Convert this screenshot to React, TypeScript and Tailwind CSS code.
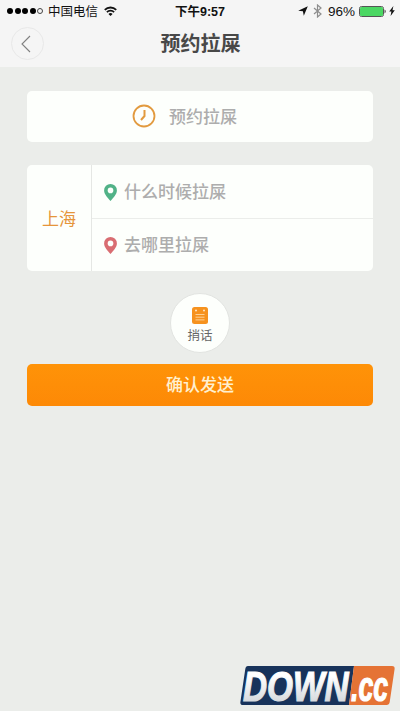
import { ReactNode } from "react";

const StatusBar = () => {
  return (
    <div className="relative flex h-[22px] items-center justify-between pl-[7px] pr-[5px] text-[#111]">
      <div className="flex items-center">
        <div className="flex gap-[1.5px]">
          {[0, 1, 2, 3].map((dot) => (
            <span key={dot} className="size-[6px] rounded-full bg-black" />
          ))}
          <span className="size-[6px] rounded-full border border-[#444]" />
        </div>
        <span className="ml-[5px] pt-[2px] text-[12.5px] leading-none">中国电信</span>
        <svg className="ml-[6px] -mt-px" width="13" height="10" viewBox="0 0 14 11" fill="none">
          <path d="M.7 4.2a9 9 0 0 1 12.6 0" stroke="#111" strokeWidth="2" />
          <path d="M3 6.8a5.7 5.7 0 0 1 8 0" stroke="#111" strokeWidth="1.9" />
          <path d="M7 11 4.7 8.7a3.3 3.3 0 0 1 4.6 0z" fill="#111" />
        </svg>
      </div>
      <span className="absolute inset-x-0 pt-[2px] text-center text-[12.5px] leading-none font-bold">
        下午9:57
      </span>
      <div className="flex items-center">
        <svg width="10" height="10" viewBox="0 0 10 10">
          <path d="M9.8.2 5.8 9.7 4.9 5.2.2 4.7z" fill="#111" />
        </svg>
        <svg className="ml-[5px]" width="9" height="14" viewBox="0 0 9 14" fill="none">
          <path d="M1 4l7 6-3.5 3V1L8 4l-7 6" stroke="#8d8d8d" strokeWidth="1.2" />
        </svg>
        <span className="ml-[6px] w-[28px] pt-px text-[13.5px] leading-none whitespace-nowrap">
          96%
        </span>
        <svg className="ml-[3px]" width="28" height="11" viewBox="0 0 28 11">
          <rect x=".5" y=".5" width="24" height="10" rx="2" fill="#fff" stroke="#555" />
          <rect x="1" y="1" width="23" height="9" rx="1.5" fill="#4bd763" />
          <path d="M25.6 3.6c1.4.5 1.4 3.3 0 3.8z" fill="#222" />
        </svg>
        <svg className="ml-[2px]" width="6" height="10" viewBox="0 0 6 10">
          <path d="M4.4 0 .2 5.6h2.2L1.6 10 5.8 4.2H3.5z" fill="#111" />
        </svg>
      </div>
    </div>
  );
};

const Header = () => {
  return (
    <div className="relative flex h-[45px] items-center justify-center">
      <button className="absolute left-[11px] top-[5px] flex size-[33px] items-center justify-center rounded-full border border-[#e8e8e8] pr-[3px]">
        <svg width="10" height="18" viewBox="0 0 10 18" fill="none">
          <path d="M9 1 1 9l8 8" stroke="#808080" strokeWidth="1.1" />
        </svg>
      </button>
      <h1 className="pb-px pl-px text-[20px] leading-none font-bold text-[#484848]">
        预约拉屎
      </h1>
    </div>
  );
};

const Pin = ({ color }: { color: string }) => {
  return (
    <svg width="13" height="17" viewBox="0 0 13 17">
      <path
        d="M6.5 0A6.4 6.4 0 0 0 .1 6.4C.1 10.5 4.2 14 6.5 17c2.3-3 6.4-6.5 6.4-10.6A6.4 6.4 0 0 0 6.5 0z"
        fill={color}
      />
      <circle cx="6.5" cy="6.4" r="2.8" fill="#fdfffc" />
    </svg>
  );
};

const PlaceRow = ({ color, children }: { color: string; children: ReactNode }) => {
  return (
    <div className="flex flex-1 items-center gap-[7px] pl-3 pt-[2px]">
      <Pin color={color} />
      <span className="text-[17px] leading-none font-medium text-[#adadad]">
        {children}
      </span>
    </div>
  );
};

const Watermark = () => {
  return (
    <svg
      className="absolute left-[240px] top-[661px]"
      width="160"
      height="50"
      viewBox="0 -4 160 50"
    >
      <defs>
        <linearGradient id="silver" x1="0" y1="0" x2="0" y2="1">
          <stop offset="0.3" stopColor="#fff" />
          <stop offset="1" stopColor="#c9ced3" />
        </linearGradient>
      </defs>
      <path d="M8 1h106l-5 39H3q-3 0-2.6-3L5.3 4q.4-3 2.7-3z" fill="#18335b" />
      <path d="M114 1h38q3 0 2.6 3l-4.9 33q-.4 3-3.2 3H109z" fill="#e57335" />
      <g
        fontFamily="Liberation Sans, sans-serif"
        fontSize="43"
        fontWeight="700"
        fontStyle="italic"
        strokeWidth="1.2"
      >
        <text transform="translate(3 36) scale(.775 1)" fill="url(#silver)" stroke="url(#silver)">
          DOWN
        </text>
        <text transform="translate(111 36) scale(.62 1)" fill="#fff" stroke="#fff">
          .cc
        </text>
      </g>
    </svg>
  );
};

const App = () => {
  return (
    <div className="relative h-[711px] w-[400px] overflow-hidden bg-[#ebedea] font-['Liberation_Sans','Noto_Sans_CJK_SC',sans-serif]">
      <div className="bg-[#f5f5f5]">
        <StatusBar />
        <Header />
      </div>

      <div className="flex flex-col px-[27px] pt-6">
        <div className="flex h-[51px] items-center justify-center gap-[13px] rounded-[5px] bg-[#fdfffc] pr-[31px]">
          <svg className="-mt-px" width="24" height="24" viewBox="0 0 24 24" fill="none">
            <circle cx="12" cy="12" r="10.5" stroke="#e29a3f" strokeWidth="1.8" />
            <path d="M12.5 6v6L9 16" stroke="#e29a3f" strokeWidth="2" />
          </svg>
          <span className="pt-px text-[17px] leading-none font-medium text-[#adadad]">
            预约拉屎
          </span>
        </div>

        <div className="mt-[23px] flex h-[106px] rounded-[5px] bg-[#fdfffc]">
          <div className="flex w-16 items-center justify-center pt-[2px] text-[17px] leading-none text-[#e6953a]">
            上海
          </div>
          <div className="flex flex-1 flex-col divide-y divide-[#ebedea] border-l border-[#e5e7e4]">
            <PlaceRow color="#51b287">什么时候拉屎</PlaceRow>
            <PlaceRow color="#d96d72">去哪里拉屎</PlaceRow>
          </div>
        </div>

        <button className="mt-[22px] flex size-[60px] flex-col items-center self-center rounded-full border border-[#e2e4e1] bg-[#fdfffc] pt-[13px]">
          <svg width="16" height="17" viewBox="0 0 16 17">
            <rect width="16" height="17" rx="2.5" fill="#f6921e" />
            <circle cx="4" cy="3.5" r="1" fill="#ffe8c8" />
            <circle cx="12" cy="3.5" r="1" fill="#ffe8c8" />
            <path d="M3.5 7.5h9M3.5 10.2h9M3.5 12.9h9" stroke="#ffd9a3" strokeWidth=".9" />
          </svg>
          <span className="mt-[6px] text-[12.5px] leading-none text-[#666]">捎话</span>
        </button>

        <button className="mt-[11px] h-[42px] rounded-[5px] bg-linear-to-b from-[#ff9308] to-[#fd8906] text-[17px] leading-none font-medium text-[#fff0cf]">
          确认发送
        </button>
      </div>

      <Watermark />
    </div>
  );
};

export default App;
